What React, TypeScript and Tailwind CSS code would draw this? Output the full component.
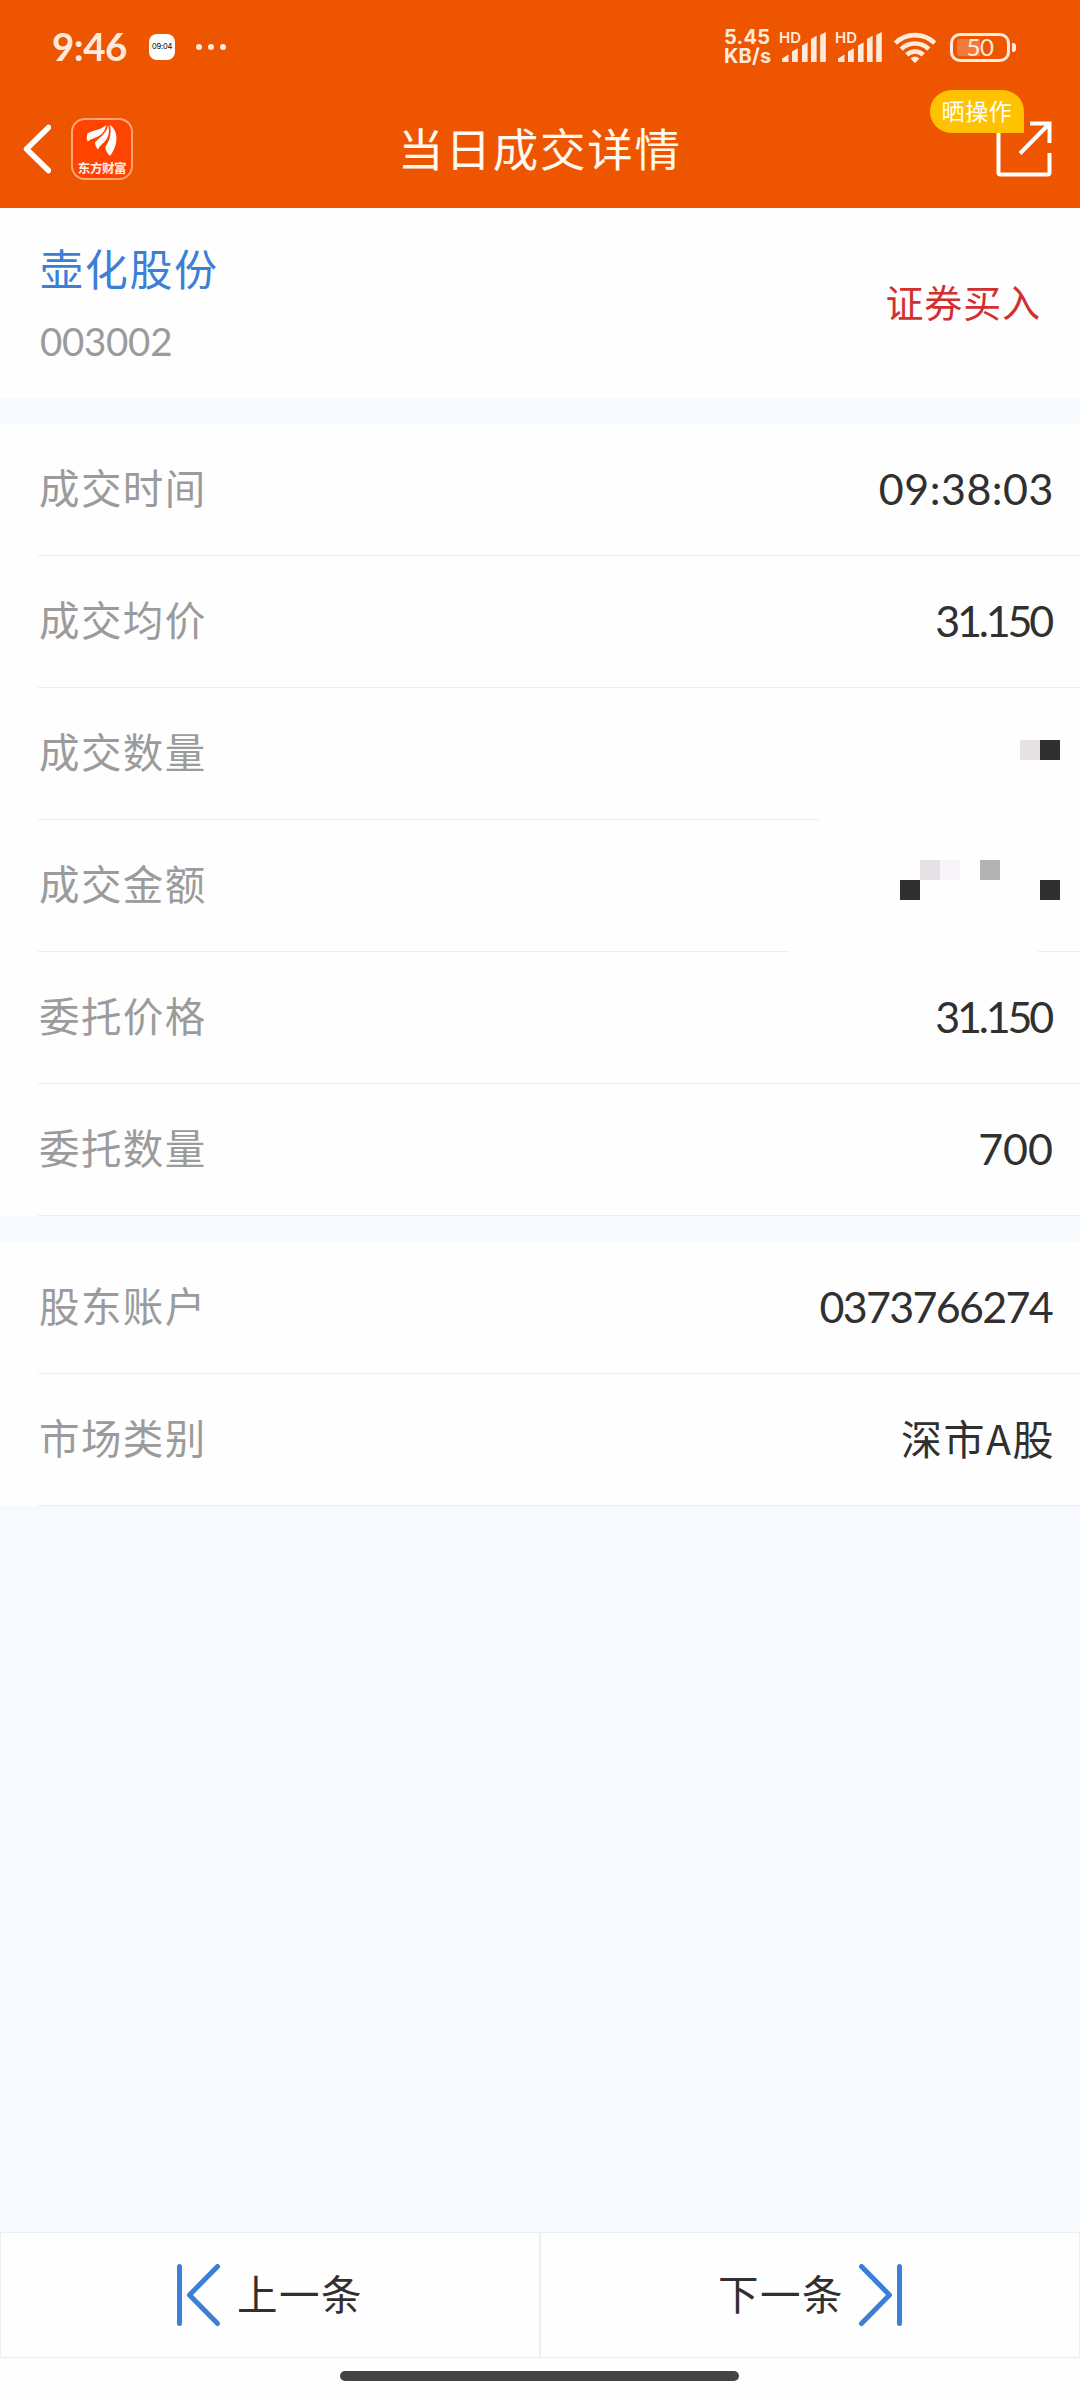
import type { ReactNode } from "react";

function Signal() {
    return (
        <div className="relative h-[33px] w-[48px]">
            <span className="absolute left-[-1px] top-0 font-['Inter'] text-[15px] font-semibold leading-[14px]">HD</span>
            <svg className="absolute inset-0" width="48" height="33" viewBox="0 0 48 33" fill="currentColor">
                <path d="M2 27.500l6.500-4V31H3.200Q2 31 2 29.800z" />
                <path d="M12 20.500l5.800-3.200V31H12z" />
                <path d="M22 14.500l5.600-3.200V31H22z" />
                <path d="M31 8l5.600-3.200V31H31z" />
                <path d="M40.200 4l5.600-3v28.800q0 1.200-1.200 1.200h-4.400z" />
            </svg>
        </div>
    );
}

function StatusBar() {
    return (
        <div className="flex h-[94px] items-center text-[#ffeadc]">
            <span className="mb-[2px] ml-[52px] w-[97px] whitespace-nowrap font-['Lato'] text-[38.5px] font-bold leading-[40px] tracking-[-0.5px]">9:46</span>
            <span className="flex h-[26px] w-[26px] items-center justify-center rounded-[8px] bg-white font-['Inter'] text-[7.5px] leading-none tracking-[-0.2px] text-black">09:04</span>
            <span className="ml-[21px] flex gap-[6px]">
                <i className="h-[6px] w-[6px] rounded-full bg-current" />
                <i className="h-[6px] w-[6px] rounded-full bg-current" />
                <i className="h-[6px] w-[6px] rounded-full bg-current" />
            </span>
            <div className="ml-auto flex w-[56px] flex-col font-['Inter'] text-[20px] font-bold leading-[19px] tracking-[0.2px]">
                <span>5.45</span>
                <span>KB/s</span>
            </div>
            <div className="mr-[9px] flex gap-2">
                <Signal />
                <Signal />
            </div>
            <svg className="mr-[13px] shrink-0" width="44" height="33" viewBox="0 0 44 33" fill="none" stroke="currentColor" strokeWidth="4.600">
                <path d="M2.300 12.200a28 28 0 0 1 39.400 0" />
                <path d="M8.200 18.200a19.500 19.500 0 0 1 27.600 0" />
                <path d="M13.800 23.900a11.600 11.600 0 0 1 16.400 0" />
                <path d="M17.500 27.500q4.500-4 9 0L22 32.200z" fill="currentColor" stroke="none" />
            </svg>
            <div className="relative flex h-[29px] w-[60px] items-center justify-center rounded-[10px] border-[3px] border-current">
                <span className="absolute left-[4px] top-[3px] h-[17px] w-[23px] rounded-l-[3px] bg-[#f47a3c]" />
                <span className="relative font-['Lato'] text-[24px] leading-none tracking-[-0.3px]">50</span>
            </div>
            <span className="ml-[2px] mr-[64px] h-[9px] w-[4px] rounded-r-[3px] bg-current" />
        </div>
    );
}

function AppLogo() {
    return (
        <div className="ml-[20px] flex h-[62px] w-[62px] flex-col items-center rounded-[14px] border-2 border-[#ffa578] bg-[#ff4300]">
            <svg className="mt-[4px]" width="32" height="33" viewBox="0 0 34 34" fill="#fff">
                <path d="M21.500 0.500C15 6.500 7 6 1.500 9.500Q0 14 1.800 18.200Q4 15.500 9 14.300C16 12 20 8 21.500 0.500z" />
                <path d="M23.500 0.500C22.500 9 14 14 9.500 19Q9.500 23 12.700 26.500Q14 23 18 20C24 15 25.500 8 23.500 0.500z" />
                <path d="M25.500 0.500C27.500 10 25 18 20.500 24Q21.500 30 25.500 33.500C32 25 37 9 25.500 0.500z" />
            </svg>
            <span className="mt-[3px] whitespace-nowrap text-[12.5px] font-bold leading-[15px] tracking-[-0.4px] text-[#fff0e8]">东方财富</span>
        </div>
    );
}

function TitleBar() {
    return (
        <div className="flex h-[114px] items-start text-white">
            <div className="flex w-[300px] items-center pt-6">
                <svg className="ml-[21px]" width="30" height="52" viewBox="0 0 30 52" fill="none" stroke="currentColor" strokeWidth="5.500" strokeLinecap="round" strokeLinejoin="round">
                    <path d="M27.500 4.500L5.500 26l22 21.500" />
                </svg>
                <AppLogo />
            </div>
            <h1 className="flex-1 pt-[20px] text-center text-[45.5px] leading-[66px] tracking-[1.800px] text-[#fff8ee]">当日成交详情</h1>
            <div className="relative h-full w-[300px]">
                <svg className="absolute left-[214px] top-[25px]" width="60" height="60" viewBox="0 0 60 60" fill="none" stroke="currentColor" strokeWidth="4">
                    <path d="M4.500 8v45.500q0 2 2 2h47q2 0 2-2V34" />
                    <path d="M36 4.500h19.500V24M55 5L26 34.500" />
                </svg>
                <span className="absolute left-[150px] top-[-4px] h-[43px] w-[94px] rounded-[21.5px] rounded-br-none bg-[#ffc200] text-center text-[23px] leading-[41px] tracking-[0.6px]">晒操作</span>
            </div>
        </div>
    );
}

// 20px blocks that hide a value; one string per line, "." is an empty block
function Mosaic({ lines }: { lines: string[] }) {
    const shades: Record<string, string> = {
        ".": "bg-transparent",
        a: "bg-[#f8f4f8]",
        b: "bg-[#e6e2e6]",
        c: "bg-[#b4b2b4]",
        d: "bg-[#303030]",
    };
    return (
        <div className="mr-[20px]">
            {lines.map((line, i) => (
                <div key={i} className="flex justify-end">
                    {line.split("").map((c, j) => (
                        <span key={j} className={`h-5 w-5 ${shades[c]}`} />
                    ))}
                </div>
            ))}
        </div>
    );
}

const fullLine = <div className="ml-[38px] h-px bg-[#eeeeee]" />;

function Row({ label, line = fullLine, children }: { label: string; line?: ReactNode; children: ReactNode }) {
    return (
        <div className="bg-[#fefefe]">
            <div className="flex h-[131px] items-center justify-between">
                <span className="mb-[5px] ml-[39px] text-[40.5px] leading-[60px] tracking-[1.400px] text-[#9b9b9b]">{label}</span>
                {children}
            </div>
            {line}
        </div>
    );
}

const num = "mb-[1px] font-['Lato'] text-[43px] leading-[60px] text-[#303030]";

export default function App() {
    return (
        <div className="flex h-[2400px] w-[1080px] flex-col overflow-hidden bg-[#f6faff] font-['Noto_Sans_CJK_SC',sans-serif]">
            <header className="bg-[#ed5500]">
                <StatusBar />
                <TitleBar />
            </header>

            <section className="mb-[26px] flex h-[190px] items-center justify-between bg-[#fefefe]">
                <div className="ml-[40px]">
                    <div className="text-[43px] leading-[64px] tracking-[1.700px] text-[#3b7fd6]">壶化股份</div>
                    <div className="mt-[12px] font-['Lato'] text-[38.5px] leading-[60px] tracking-[-0.3px] text-[#9b9b9b]">003002</div>
                </div>
                <div className="mb-[5px] mr-[39px] text-[38px] leading-[56px] tracking-[0.9px] text-[#d32f2f]">证券买入</div>
            </section>

            <section className="mb-[26px]">
                <Row label="成交时间">
                    <span className={`${num} mr-[26px] tracking-[0.5px]`}>09:38:03</span>
                </Row>
                <Row label="成交均价">
                    <span className={`${num} mr-[29px] tracking-[-3.200px]`}>31.150</span>
                </Row>
                <Row label="成交数量" line={<div className="ml-[38px] h-px w-[782px] bg-[#eeeeee]" />}>
                    <div className="mb-[7px]">
                        <Mosaic lines={["bd"]} />
                    </div>
                </Row>
                <Row
                    label="成交金额"
                    line={
                        <div className="ml-[38px] flex h-px justify-between">
                            <div className="w-[751px] bg-[#eeeeee]" />
                            <div className="w-[42px] bg-[#eeeeee]" />
                        </div>
                    }
                >
                    <div className="mb-[11px]">
                        <Mosaic lines={["ba.c...", "d......d"]} />
                    </div>
                </Row>
                <Row label="委托价格">
                    <span className={`${num} mr-[29px] tracking-[-3.200px]`}>31.150</span>
                </Row>
                <Row label="委托数量">
                    <span className={`${num} mr-[27px]`}>700</span>
                </Row>
            </section>

            <section>
                <Row label="股东账户">
                    <span className={`${num} mr-[28px] tracking-[-1.700px]`}>0373766274</span>
                </Row>
                <Row label="市场类别">
                    <span className="mb-[6px] mr-[25px] text-[41px] leading-[60px] tracking-[1.500px] text-[#303030]">深市A股</span>
                </Row>
            </section>

            <footer className="mt-auto h-[168px] bg-[#fefefe]">
                <div className="flex h-[126px] text-[40.5px] leading-[60px] tracking-[1.500px] text-[#303030]">
                    <button className="flex w-1/2 items-center border border-[#eeeeee] pl-[173px]">
                        <svg width="50" height="70" viewBox="0 0 50 70" fill="none" stroke="#3b7fd6" strokeWidth="5" strokeLinecap="round" strokeLinejoin="round">
                            <path d="M5.500 6.500v57M43.500 6.500L15.500 35L43.500 63.500" />
                        </svg>
                        <span className="mb-[5px] ml-[13px]">上一条</span>
                    </button>
                    <button className="flex w-1/2 items-center justify-end border border-[#eeeeee] pr-[174px]">
                        <span className="mb-[5px] mr-[11px]">下一条</span>
                        <svg width="50" height="70" viewBox="0 0 50 70" fill="none" stroke="#3b7fd6" strokeWidth="5" strokeLinecap="round" strokeLinejoin="round">
                            <path d="M44.500 6.500v57M6.500 6.500L34.500 35L6.500 63.500" />
                        </svg>
                    </button>
                </div>
                <div className="ml-[340px] mt-[13px] h-[10px] w-[399px] rounded-full bg-[#444543]" />
            </footer>
        </div>
    );
}
